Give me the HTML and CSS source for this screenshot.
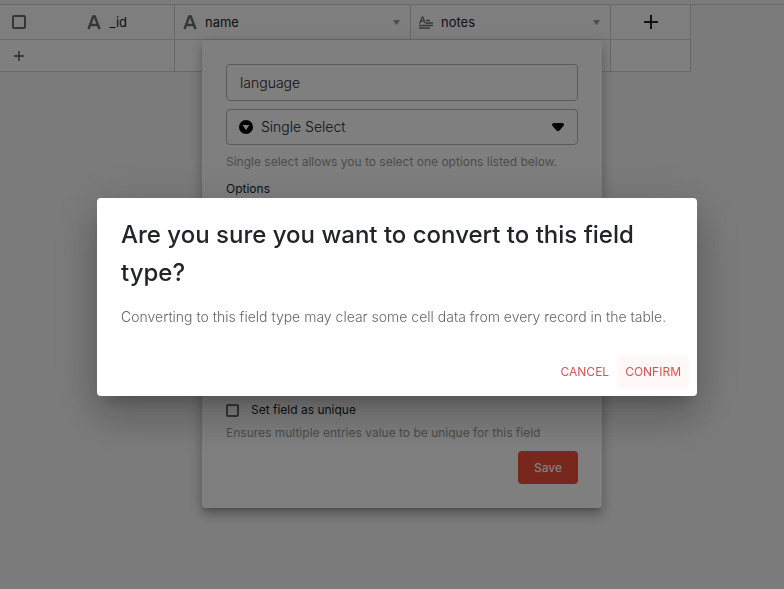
FILE: index.html
```html
<!DOCTYPE html>
<html lang="en">
<head>
<meta charset="utf-8">
<meta name="viewport" content="width=device-width, initial-scale=1">
<title>Convert field type</title>
<link rel="stylesheet" href="styles.css">
</head>
<body>
<main class="page">
  <table class="grid">
    <colgroup><col class="col-id"><col class="col-name"><col class="col-notes"><col class="col-add"></colgroup>
    <thead>
      <tr>
        <th>
          <div class="head head-id">
            <input class="check" type="checkbox" aria-label="Select all rows">
            <span class="label">
              <svg class="letter" viewBox="0 0 14 15" aria-hidden="true"><path d="M1.5 14 6.2 1.5h1.6L12.5 14M3.5 10h7"/></svg>
              <span>_id</span>
            </span>
          </div>
        </th>
        <th>
          <div class="head">
            <svg class="letter" viewBox="0 0 14 15" aria-hidden="true"><path d="M1.5 14 6.2 1.5h1.6L12.5 14M3.5 10h7"/></svg>
            <span>name</span>
            <svg class="caret" viewBox="0 0 8 6" aria-hidden="true"><path d="M1.2 0h5.6q1.2 0 .8 1.3L4.8 5.3q-.8 1-1.6 0L.4 1.3Q0 0 1.2 0z"/></svg>
          </div>
        </th>
        <th>
          <div class="head">
            <svg class="longtext" viewBox="0 0 14 13" aria-hidden="true"><path class="thin" d="M.7 7.5 3.2 1h.6l2.500 6.500M1.700 5.200h3.600"/><path d="M7 4.500h4M7 7h7M0 9.500h14M0 12h11"/></svg>
            <span>notes</span>
            <svg class="caret" viewBox="0 0 8 6" aria-hidden="true"><path d="M1.2 0h5.6q1.2 0 .8 1.3L4.8 5.3q-.8 1-1.6 0L.4 1.3Q0 0 1.2 0z"/></svg>
          </div>
        </th>
        <th>
          <button class="icon-button" type="button" aria-label="Add field"><svg class="plus" viewBox="0 0 14 14" aria-hidden="true"><path d="M7 0v14M0 7h14"/></svg></button>
        </th>
      </tr>
    </thead>
    <tbody>
      <tr>
        <td><button class="icon-button add-row" type="button" aria-label="Add row"><svg class="plus-small" viewBox="0 0 10 10" aria-hidden="true"><path d="M5 0v10M0 5h10"/></svg></button></td>
        <td></td><td></td><td></td>
      </tr>
    </tbody>
  </table>

  <form class="popover">
    <input class="field" type="text" value="language" aria-label="Field name">
    <div class="select-wrap">
      <svg class="type-icon" viewBox="0 0 14 14" aria-hidden="true"><circle cx="7" cy="7" r="7"/><path d="M4.300 5h5.400q.6 0 .3.6L7.500 9.500q-.5.6-1 0L4 5.600q-.3-.6.3-.6z"/></svg>
      <select class="field select" aria-label="Field type"><option>Single Select</option></select>
      <svg class="select-caret" viewBox="0 0 12 9" aria-hidden="true"><path d="M2 0h8q2 0 2 1.500 0 .8-.6 1.500L7.500 7.500q-1.500 1.600-3 0L.6 3Q0 2.300 0 1.500 0 0 2 0z"/></svg>
    </div>
    <p class="hint">Single select allows you to select one options listed below.</p>
    <div class="options">Options</div>
    <label class="unique"><input class="check check-small" type="checkbox"><span>Set field as unique</span></label>
    <p class="hint unique-hint">Ensures multiple entries value to be unique for this field</p>
    <button class="save" type="submit">Save</button>
  </form>
</main>

<div class="backdrop">
  <section class="dialog" role="alertdialog" aria-modal="true" aria-labelledby="dialog-title" aria-describedby="dialog-text">
    <h2 class="dialog-title" id="dialog-title">Are you sure you want to convert to this field type?</h2>
    <p class="dialog-text" id="dialog-text">Converting to this field type may clear some cell data from every record in the table.</p>
    <div class="actions">
      <button class="action" type="button">CANCEL</button>
      <button class="action action-active" type="button">CONFIRM</button>
    </div>
  </section>
</div>
</body>
</html>
```
FILE: styles.css
```css
* { box-sizing: border-box; }

body {
  margin: 0;
  min-height: 100vh;
  background: #f7f7f7;
  color: #212529;
  font: 13px/20px Inter, "Liberation Sans", sans-serif;
  overflow: hidden;
}

button, input, select { font: inherit; color: inherit; margin: 0; }
p, h2 { margin: 0; }
svg { display: block; flex: none; }

.page {
  position: relative;
  padding-top: 4px;
}

.page::before {
  content: "";
  display: block;
  height: 1px;
  background: #d2d2d2;
}

.grid {
  width: 691px;
  table-layout: fixed;
  border-collapse: separate;
  border-spacing: 0;
  background: #fff;
}

.col-id { width: 175px; }
.col-name { width: 236px; }
.col-notes { width: 200px; }
.col-add { width: 80px; }

.grid th, .grid td {
  height: 32px;
  padding: 0;
  border-right: 1px solid #d2d2d2;
  border-bottom: 1px solid #d2d2d2;
  font-weight: 400;
  text-align: left;
}

.grid th { height: 35px; background: #fcfcfc; }

.grid td:nth-child(2) { border-right-color: #fff; }

.head {
  display: flex;
  align-items: center;
  gap: 8px;
  padding: 0 10px 0 8px;
}

.head-id { justify-content: space-between; padding: 0 47px 0 12px; }
.label { display: flex; align-items: center; gap: 9px; }

.letter { width: 14px; height: 15px; fill: none; stroke: #6c6c6c; stroke-width: 2.4; }
.longtext { width: 14px; height: 13px; fill: none; stroke: #6c6c6c; stroke-width: 1.4; }
.longtext .thin { stroke-width: 1.2; }
.caret { width: 7px; height: 5px; margin-left: auto; fill: #9c9c9c; }

.check {
  appearance: none;
  flex: none;
  width: 14px;
  height: 14px;
  border: 2px solid #6c6c6c;
  border-radius: 2px;
}

.check-small { width: 13px; height: 13px; }

.icon-button {
  display: flex;
  align-items: center;
  justify-content: center;
  width: 100%;
  padding: 0;
  border: 0;
  background: none;
}

.add-row { justify-content: flex-start; padding-left: 14px; }
.plus { width: 14px; height: 14px; stroke: #212529; stroke-width: 2; }
.plus-small { width: 10px; height: 10px; stroke: #555; stroke-width: 1.4; }

.popover {
  position: absolute;
  top: 40px;
  left: 202px;
  display: flex;
  flex-direction: column;
  width: 400px;
  padding: 24px;
  border-radius: 4px;
  background: #fff;
  box-shadow: 0 5px 5px -3px rgba(0, 0, 0, .2), 0 8px 10px 1px rgba(0, 0, 0, .14), 0 3px 14px 2px rgba(0, 0, 0, .12);
}

.field {
  width: 100%;
  height: 37px;
  padding: 0 13px;
  border: 1px solid #b4b4b4;
  border-radius: 4px;
  background: transparent;
  font-size: 14px;
  font-weight: 300;
}

.select-wrap { position: relative; margin-top: 8px; }
.select { display: block; height: 36px; padding-left: 34px; appearance: none; }
.type-icon { position: absolute; top: 11px; left: 13px; width: 14px; height: 14px; }
.type-icon path { fill: #fff; }
.select-caret { position: absolute; top: 14px; right: 14px; width: 12px; height: 9px; }

.hint { margin-top: 7px; color: #999; font-size: 12px; }
.options { min-height: 221px; margin-top: 7px; font-size: 12px; }
.unique { display: flex; align-items: center; gap: 12px; font-size: 12px; }
.unique-hint { margin-top: 3px; }

.save {
  align-self: flex-end;
  width: 60px;
  height: 33px;
  margin-top: 8px;
  padding: 0;
  border: 0;
  border-radius: 4px;
  background: #f04f38;
  color: #fff;
  font-size: 12px;
  font-weight: 500;
}

.backdrop {
  position: fixed;
  inset: 0;
  display: flex;
  align-items: center;
  justify-content: center;
  padding: 5px 0 0 10px;
  background: rgba(0, 0, 0, .5);
}

.dialog {
  width: 600px;
  max-width: 100%;
  border-radius: 4px;
  background: #fff;
  box-shadow: 0 11px 15px -7px rgba(0, 0, 0, .2), 0 24px 38px 3px rgba(0, 0, 0, .14), 0 9px 46px 8px rgba(0, 0, 0, .12);
}

.dialog-title {
  padding: 18px 24px 13px;
  font-size: 24px;
  font-weight: 500;
  line-height: 38px;
}

.dialog-text {
  padding: 0 24px 19px;
  color: #666;
  font-size: 14px;
  font-weight: 300;
  line-height: 24px;
}

.actions { display: flex; justify-content: flex-end; padding: 8px; }

.action {
  height: 32px;
  padding: 0 8px;
  border: 0;
  border-radius: 4px;
  background: transparent;
  color: #d9534f;
  font-size: 12px;
}

.action-active { background: #fff8f6; }
```
